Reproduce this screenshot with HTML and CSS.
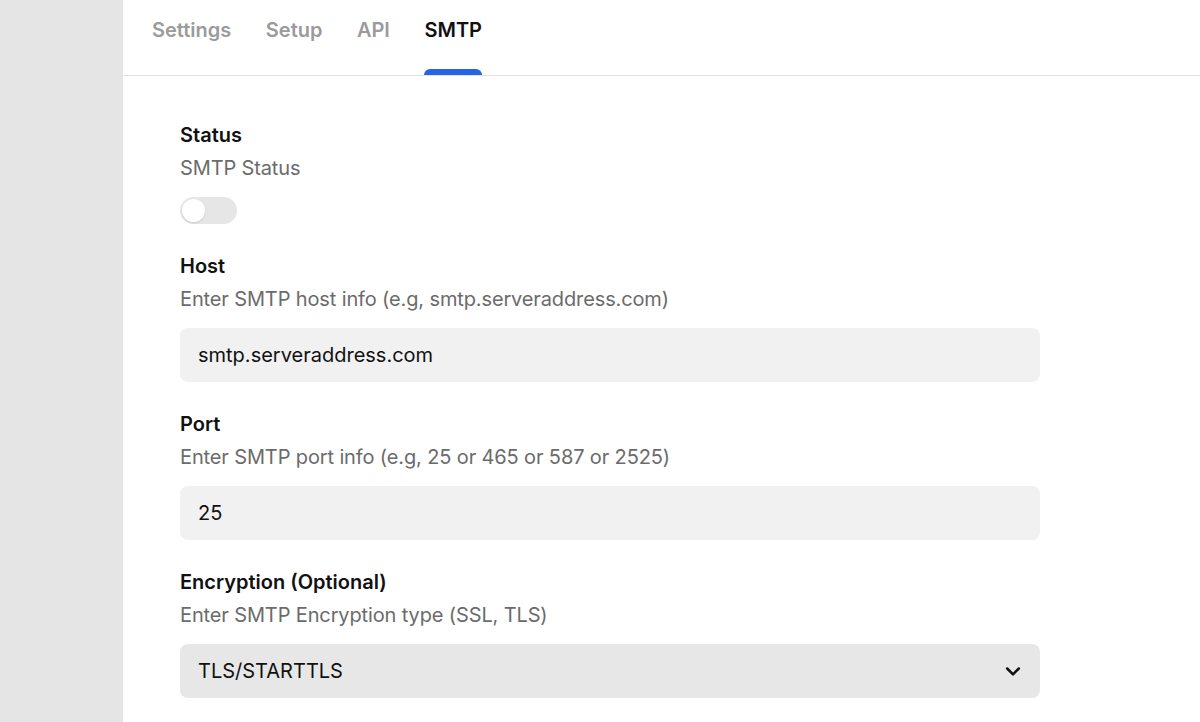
FILE: index.html
```html
<!DOCTYPE html>
<html lang="en">
<head>
  <meta charset="UTF-8">
  <meta name="viewport" content="width=device-width, initial-scale=1.0">
  <title>SMTP Settings</title>
  <link rel="stylesheet" href="styles.css">
</head>
<body>
  <aside class="sidebar"></aside>
  <main class="main">
    <nav class="tabs">
      <a href="#" class="tab">Settings</a>
      <a href="#" class="tab">Setup</a>
      <a href="#" class="tab">API</a>
      <a href="#" class="tab active">SMTP</a>
    </nav>
    <form class="form">
      <div class="field">
        <label class="label">Status</label>
        <div class="hint">SMTP Status</div>
        <span class="toggle"><span class="knob"></span></span>
      </div>
      <div class="field">
        <label class="label">Host</label>
        <div class="hint">Enter SMTP host info (e.g, smtp.serveraddress.com)</div>
        <input class="input" type="text" value="smtp.serveraddress.com">
      </div>
      <div class="field">
        <label class="label">Port</label>
        <div class="hint">Enter SMTP port info (e.g, 25 or 465 or 587 or 2525)</div>
        <input class="input" type="text" value="25">
      </div>
      <div class="field">
        <label class="label">Encryption (Optional)</label>
        <div class="hint">Enter SMTP Encryption type (SSL, TLS)</div>
        <div class="select">
          <span>TLS/STARTTLS</span>
          <svg width="20" height="20" viewBox="0 0 24 24" fill="none" stroke="#111" stroke-width="3" stroke-linecap="round" stroke-linejoin="round"><path d="M5 9l7 7 7-7"/></svg>
        </div>
      </div>
    </form>
  </main>
</body>
</html>
```

FILE: styles.css
```css
body {
  margin: 0;
  font-family: Inter, "Noto Sans", sans-serif;
  color: #111;
  display: flex;
  height: 722px;
  overflow: hidden;
  background: #fff;
}
.sidebar {
  width: 123px;
  flex-shrink: 0;
  background-color: #e5e5e5;
}
.main {
  flex: 1;
}
.tabs {
  display: flex;
  gap: 34.5px;
  padding-left: 29px;
  height: 75px;
  border-bottom: 1px solid #e2e2e2;
}
.tab {
  position: relative;
  font-size: 20px;
  font-weight: 600;
  color: #9b9b9b;
  text-decoration: none;
  padding-top: 16px;
  line-height: 28px;
}
.tab.active {
  color: #111;
}
.tab.active::after {
  content: "";
  position: absolute;
  left: 0;
  right: 0;
  bottom: 0;
  height: 6px;
  border-radius: 6px 6px 0 0;
  background-color: #2563eb;
}
.form {
  width: 860px;
  padding: 43px 0 0 57px;
  display: flex;
  flex-direction: column;
  gap: 26px;
}
.field {
  display: flex;
  flex-direction: column;
}
.label {
  font-size: 20px;
  font-weight: 600;
  line-height: 33px;
}
.hint {
  font-size: 20px;
  line-height: 33px;
  letter-spacing: -0.13px;
  color: #6b6b6b;
  margin-bottom: 12px;
}
.toggle {
  width: 57px;
  height: 27px;
  border-radius: 14px;
  background-color: #e6e6e6;
  display: flex;
  align-items: center;
  padding: 0 2px;
  box-sizing: border-box;
}
.knob {
  width: 23px;
  height: 23px;
  border-radius: 50%;
  background-color: #fff;
  box-shadow: 0 1px 2px rgba(0,0,0,0.12);
}
.input {
  height: 54px;
  border: none;
  border-radius: 8px;
  background-color: #f1f1f1;
  padding: 0 18px;
  font-family: inherit;
  font-size: 20px;
  color: #111;
  outline: none;
}
.select {
  height: 54px;
  border-radius: 8px;
  background-color: #e7e7e7;
  padding: 0 17px 0 18px;
  display: flex;
  align-items: center;
  justify-content: space-between;
  font-size: 20px;
}
```
